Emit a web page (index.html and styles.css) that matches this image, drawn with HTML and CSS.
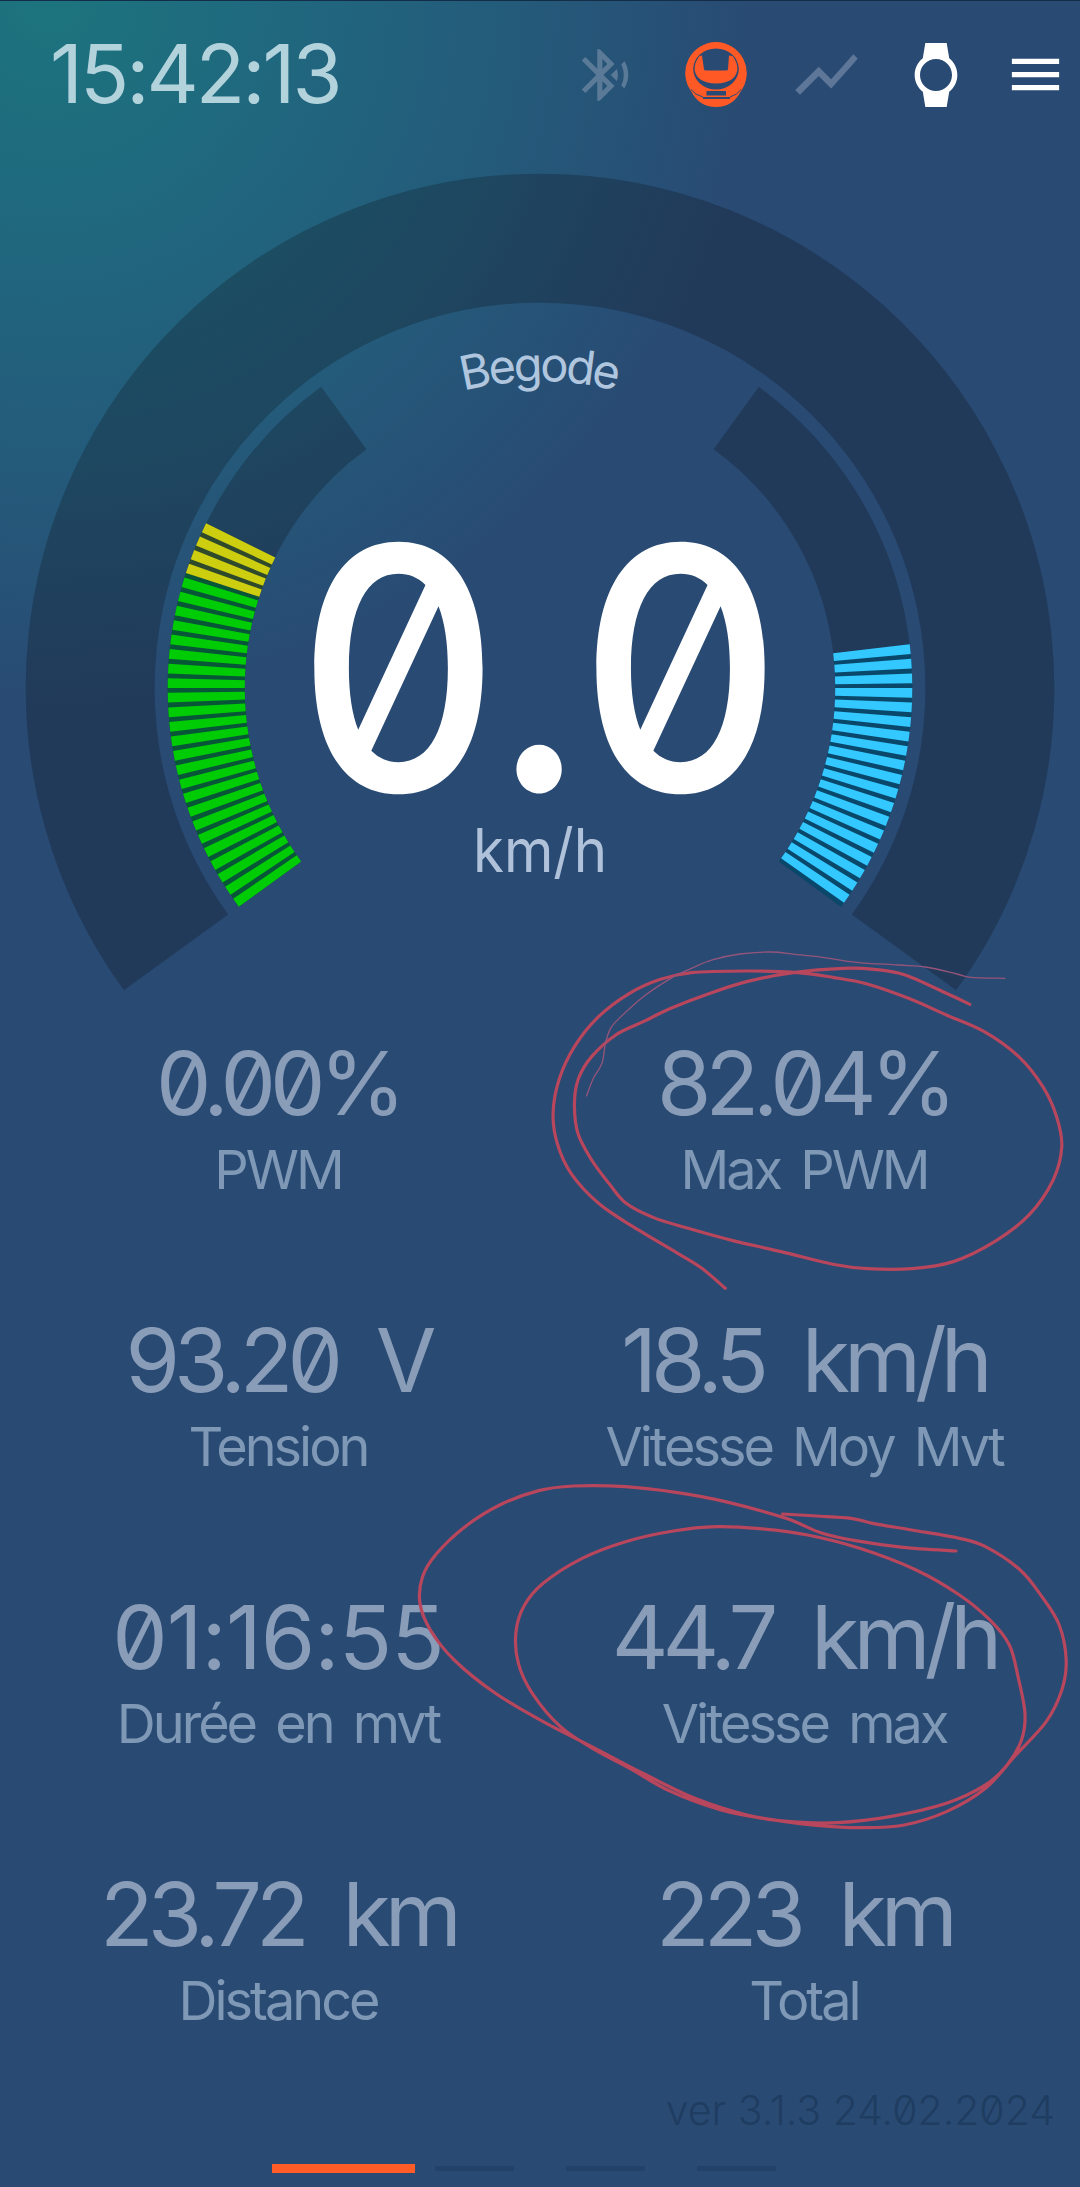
FILE: index.html
```html
<!DOCTYPE html>
<html lang="fr">
<head>
  <meta charset="UTF-8">
  <meta name="viewport" content="width=device-width, initial-scale=1.0">
  <title>Begode</title>
  <link rel="stylesheet" href="styles.css">
</head>
<body>
  <div class="screen">
    <header class="topbar">
      <div class="clock">15:42:13</div>
      <svg class="icon icon-bt" viewBox="0 0 24 24"><path d="M14.24 12.01l2.32 2.32c.28-.72.44-1.51.44-2.33 0-.82-.16-1.59-.43-2.31l-2.33 2.32zm5.29-5.3l-1.26 1.26c.63 1.21.98 2.57.98 4.02s-.36 2.82-.98 4.02l1.2 1.2c.97-1.54 1.54-3.36 1.54-5.31-.01-1.89-.55-3.67-1.48-5.19zm-3.82 1L10 2H9v7.59L4.41 5 3 6.41 8.59 12 3 17.59 4.41 19 9 14.41V22h1l5.71-5.71-4.3-4.29 4.3-4.29zM11 5.83l1.88 1.88L11 9.59V5.83zm1.88 10.46L11 18.17v-3.76l1.88 1.88z"/></svg>
      <svg class="icon icon-wheel" viewBox="0 0 62 65">
        <path class="wheel-body" d="M31 0a31 31 0 0 1 25 49Q48 65 31 65T6 49A31 31 0 0 1 31 0z"/>
        <ellipse class="wheel-cut" cx="31" cy="27" rx="22.8" ry="20.5"/>
        <path class="wheel-body" d="M14.500 14Q9.500 20 9.600 28Q12 41 31 41.500Q50 41 52.400 28Q52.500 20 47.500 14L44 13.500L43 27.500Q42.500 28.500 41 28.500H21Q19.500 28.500 19 27.500L17 13.500z"/>
        <path class="wheel-cut" d="M21.500 49H41V53.500H21.500zM18 55H45V57H18z"/>
        <path class="wheel-line" d="M6 47.500Q10 53 18 55M56 47.500Q52 53 45 55"/>
      </svg>
      <svg class="icon icon-chart" viewBox="0 0 24 24"><path d="M3.5 18.49l6-6.01 4 4L22 6.92l-1.41-1.41-7.09 7.97-4-4L2 16.99z"/></svg>
      <svg class="icon icon-watch" viewBox="0 0 24 24"><path d="M20 12c0-2.540-1.190-4.810-3.040-6.270L16 0H8l-.95 5.730C5.190 7.190 4 9.450 4 12s1.190 4.810 3.050 6.270L8 24h8l.96-5.730C18.810 16.810 20 14.540 20 12zM6 12c0-3.310 2.690-6 6-6s6 2.690 6 6-2.690 6-6 6-6-2.690-6-6z"/></svg>
      <svg class="icon icon-menu" viewBox="0 0 24 24"><path d="M3 18h18v-2H3v2zm0-5h18v-2H3v2zm0-7v2h18V6H3z"/></svg>
    </header>

    <!-- arcs are centred on 0,0; the inner ones span 90 degrees, 40 ticks each -->
    <svg class="gauge" viewBox="-540 -540 1080 540" width="1080" height="540">
      <path class="track track-outer" d="M-363.900 264.400A449.800 449.800 0 1 1 363.900 264.400"/>
      <path class="track track-inner" d="M-270 196.200A333.750 333.750 0 0 1 -196.200 -270"/>
      <path class="track track-inner" d="M196.200 -270A333.750 333.750 0 0 1 270 196.200"/>

      <path class="under under-green" pathLength="90" stroke-dasharray="54 100" d="M-270 196.200A333.750 333.750 0 0 1 -196.200 -270"/>
      <path class="under under-yellow" pathLength="90" stroke-dasharray="0 54 8.250 100" d="M-270 196.200A333.750 333.750 0 0 1 -196.200 -270"/>
      <path class="under under-cyan" pathLength="90" stroke-dasharray="0 47.250 42.750 100" d="M196.200 -270A333.750 333.750 0 0 1 270 196.200"/>
      <path class="green" id="ticks-green"/>
      <path class="yellow" id="ticks-yellow"/>
      <path class="cyan" id="ticks-cyan"/>

      <path id="name-arc" fill="none" d="M-217 -217A307 307 0 0 1 217 -217"/>
      <text class="wheel-name"><textPath href="#name-arc" startOffset="50%" textLength="155">Begode</textPath></text>
      <text class="speed" transform="scale(.93 1)" x="-152.200 -1 151.100" y="103">0.0</text>
      <text class="unit" x="-67" y="184" textLength="134" lengthAdjust="spacingAndGlyphs">km/h</text>
    </svg>

    <main class="stats">
      <div class="stat"><div class="value">0.00%</div><div class="label">PWM</div></div>
      <div class="stat"><div class="value">82.04%</div><div class="label">Max PWM</div></div>
      <div class="stat"><div class="value">93.20 V</div><div class="label">Tension</div></div>
      <div class="stat"><div class="value">18.5 km/h</div><div class="label">Vitesse Moy Mvt</div></div>
      <div class="stat"><div class="value value-time">01:16:55</div><div class="label">Durée en mvt</div></div>
      <div class="stat"><div class="value">44.7 km/h</div><div class="label">Vitesse max</div></div>
      <div class="stat"><div class="value">23.72 km</div><div class="label">Distance</div></div>
      <div class="stat"><div class="value">223 km</div><div class="label">Total</div></div>
    </main>

    <div class="version">ver 3.1.3 24.02.2024</div>
    <nav class="pages">
      <span class="page active"></span>
      <span class="page"></span>
      <span class="page"></span>
      <span class="page"></span>
    </nav>

    <svg class="pen" viewBox="0 0 1080 2187" width="1080" height="2187">
      <g transform="translate(540 920) scale(.3444 .3333)">
        <path data-points="1248,253 1180,220 1060,165 970,148 880,145 740,157 600,185 480,225 380,265 300,305 220,345 150,410 112,475 100,550 110,640 150,720 200,790 250,850 330,893 430,925 560,962 700,995 850,1033 950,1046 1080,1046 1200,1025 1320,965 1420,885 1490,780 1515,680 1500,590 1460,500 1390,410 1290,335 1180,285 1070,235 950,192 850,172 740,157 600,153 440,158 350,178 260,220 170,290 100,380 55,480 38,580 50,670 90,760 170,850 270,920 400,1000 470,1045 538,1105"/>
        <path class="thin" data-points="1350,175 1250,172 1210,162 1120,141 1040,135 920,127 820,112 740,103 670,96 580,102 500,120 440,145 380,175 300,230 235,290 205,325 190,370 180,430 155,475 135,528"/>
      </g>
      <g transform="translate(400 1460) scale(.4337 .3333)">
        <path data-points="1282,273 1160,262 1050,242 970,218 890,175 750,125 640,98 520,80 400,78 320,92 230,135 150,200 85,280 52,350 46,430 70,510 125,600 220,700 330,785 450,865 560,940 680,1015 800,1065 900,1085 1010,1088 1130,1070 1260,1030 1350,975 1400,915 1433,840 1441,760 1425,650 1405,555 1360,480 1290,405 1190,330 1060,265 940,225 830,206 730,200 630,213 520,245 420,295 330,370 285,440 267,520 273,610 305,700 370,800 450,870 530,925 620,992 740,1050 860,1080 960,1096 1060,1103 1160,1096 1260,1055 1350,985 1420,885 1490,785 1526,690 1536,600 1520,495 1480,410 1430,330 1350,260 1290,235 1180,210 1090,190 1040,175 960,168 882,162"/>
      </g>
    </svg>
  </div>

  <script>
    // one radial sector per tick, clockwise from `from` (degrees)
    function ticks(from, count) {
      const step = 2.25, width = 1.5, inner = 295.2, outer = 372.3;
      let d = "";
      for (let i = 0; i < count; i++) {
        const a = (from + i * step) * Math.PI / 180;
        const b = (from + i * step + width) * Math.PI / 180;
        const pt = (r, t) => (r * Math.cos(t)).toFixed(2) + " " + (r * Math.sin(t)).toFixed(2);
        d += "M" + pt(inner, a) + "L" + pt(outer, a) + "L" + pt(outer, b) + "L" + pt(inner, b) + "Z";
      }
      return d;
    }
    document.getElementById("ticks-green").setAttribute("d", ticks(144, 24));
    document.getElementById("ticks-yellow").setAttribute("d", ticks(198, 4));
    document.getElementById("ticks-cyan").setAttribute("d", ticks(-6.75, 19));

    // smooth the pen strokes through their points
    document.querySelectorAll("[data-points]").forEach(function (path) {
      const p = path.dataset.points.split(" ").map(s => s.split(",").map(Number));
      let d = "M" + p[0];
      for (let i = 0; i < p.length - 1; i++) {
        const a = p[i - 1] || p[i], b = p[i], c = p[i + 1], e = p[i + 2] || c;
        d += "C" + [b[0] + (c[0] - a[0]) / 6, b[1] + (c[1] - a[1]) / 6,
                    c[0] - (e[0] - b[0]) / 6, c[1] - (e[1] - b[1]) / 6, c[0], c[1]].join(" ");
      }
      path.setAttribute("d", d);
    });
  </script>
</body>
</html>
```
FILE: styles.css
```css
body {
  margin: 0;
  background: #294a73;
  font-family: Inter, "Noto Sans", sans-serif;
  font-feature-settings: "zero" 1;
}

.screen {
  position: relative;
  display: flex;
  flex-direction: column;
  box-sizing: border-box;
  width: 1080px;
  height: 2187px;
  overflow: hidden;
  border-top: 1px solid #132c48;
  background: radial-gradient(circle 710px at 50px 0, #1c747e 0%, #20677e 34%, #245a7a 66%, #294a73 100%) #294a73;
}

/* Top bar */
.topbar {
  display: flex;
  align-items: center;
  height: 147px;
  padding: 0 13px 0 50px;
}

.clock {
  flex: 1;
  color: #b2d2dc;
  font-size: 81px;
  font-weight: 400;
  line-height: 1;
  letter-spacing: -3px;
}

.icon {
  flex: none;
  fill: #fff;
}

.icon-bt {
  width: 62px;
  height: 62px;
  fill: #5a7a98;
}

.icon-wheel {
  width: 62px;
  height: 65px;
  margin-left: 49px;
}

.wheel-body {
  fill: #ff5a26;
}

.wheel-cut {
  fill: #294a73;
}

.wheel-line {
  fill: none;
  stroke: #294a73;
  stroke-width: 1;
}

.icon-chart {
  width: 75px;
  height: 75px;
  margin-left: 42px;
  fill: #5e7799;
}

.icon-watch {
  width: 64px;
  height: 64px;
  margin-left: 40px;
}

.icon-menu {
  width: 63px;
  height: 63px;
  margin-left: 36px;
}

/* Gauge */
.gauge {
  flex: none;
  height: 540px;
  margin-bottom: 343px;
  overflow: visible;
}

.track {
  fill: none;
  stroke: rgba(10, 0, 0, 0.21);
}

.track-outer {
  stroke-width: 129;
}

.track-inner,
.under {
  stroke-width: 77;
}

.green { fill: #00cc05; }
.yellow { fill: #cece10; }
.cyan { fill: #33c8ff; }

.under { fill: none; }
.under-green { stroke: #085638; }
.under-yellow { stroke: #2f4a2b; }
.under-cyan { stroke: #0a486b; }

.wheel-name {
  fill: #b0c6de;
  font-size: 47px;
  font-weight: 400;
  text-anchor: middle;
}

.speed {
  fill: #fff;
  font-size: 338px;
  font-weight: 500;
  text-anchor: middle;
}

.unit {
  fill: #b0c2da;
  font-size: 61px;
  font-weight: 400;
}

/* Stats */
.stats {
  display: grid;
  grid-template-columns: 1fr 1fr;
  grid-auto-rows: 277px;
  padding: 0 13px 0 15px;
  text-align: center;
  white-space: nowrap;
}

.value {
  color: #899cb8;
  font-size: 88px;
  font-weight: 400;
  line-height: 105px;
  letter-spacing: -6px;
  word-spacing: 20px;
}

.value-time {
  letter-spacing: -1px;
}

.label {
  color: #7e98b6;
  font-size: 54px;
  font-weight: 400;
  line-height: 67px;
  letter-spacing: -3px;
  word-spacing: 8px;
}

.version {
  margin-top: -54px;
  padding-right: 25px;
  color: #1f3c61;
  font-size: 41px;
  font-weight: 300;
  line-height: 50px;
  text-align: right;
}

.pages {
  display: flex;
  align-items: center;
  gap: 52px;
  margin: 29px 0 0 272px;
}

.page {
  width: 79px;
  height: 5px;
  background: #23426a;
}

.page.active {
  width: 143px;
  height: 9px;
  margin-right: -32px;
  background: #ff5c28;
}

/* Hand-drawn circles over the stats */
.pen {
  position: absolute;
  top: -1px;
  left: 0;
  fill: none;
  stroke: #b8465c;
  stroke-width: 3.2;
  stroke-linecap: round;
}

.pen path {
  vector-effect: non-scaling-stroke;
}

.pen .thin {
  stroke: #95557a;
  stroke-width: 1.3;
}
```
